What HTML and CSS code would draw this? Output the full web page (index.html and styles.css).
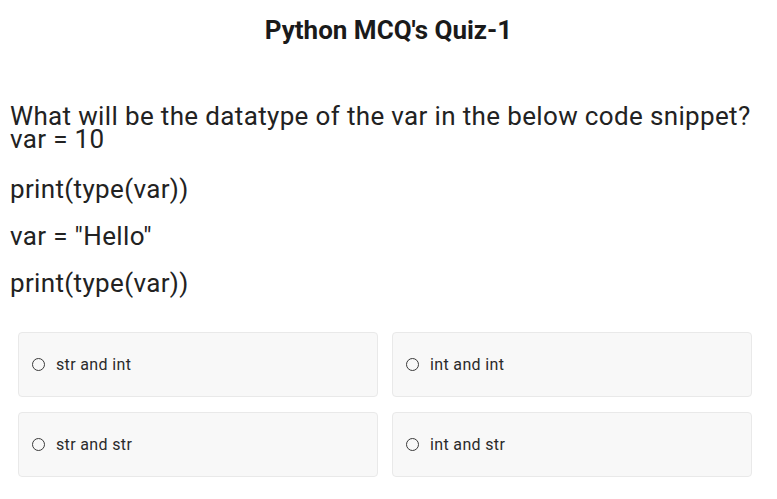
FILE: index.html
```html
<!DOCTYPE html>
<html>
<head>
<meta charset="utf-8">
<link rel="stylesheet" href="styles.css">
</head>
<body>
<div class="quiz">
  <h1 class="title">Python MCQ's Quiz-1</h1>
  <div class="question">
    <div class="q-head">What will be the datatype of the var in the below code snippet?</div>
    <p class="code first">var = 10</p>
    <p class="code">print(type(var))</p>
    <p class="code">var = "Hello"</p>
    <p class="code">print(type(var))</p>
  </div>
  <div class="options">
    <label class="option"><span class="radio"></span><span class="opt-text">str and int</span></label>
    <label class="option"><span class="radio"></span><span class="opt-text">int and int</span></label>
    <label class="option"><span class="radio"></span><span class="opt-text">str and str</span></label>
    <label class="option"><span class="radio"></span><span class="opt-text">int and str</span></label>
  </div>
</div>
</body>
</html>
```
FILE: styles.css
```css
html, body {
  margin: 0;
  padding: 0;
  background: #ffffff;
}
body {
  font-family: Roboto, "Liberation Sans", sans-serif;
  color: #1f1f1f;
}
.quiz {
  padding: 0 10px;
}
.title {
  margin: 0;
  padding-top: 16px;
  font-size: 26px;
  font-weight: 700;
  text-align: center;
  line-height: 28px;
  color: #1a1a1a;
}
.question {
  margin-top: 61px;
  font-size: 26px;
  letter-spacing: 0.35px;
  color: #222;
}
.q-head {
  line-height: 23px;
  white-space: nowrap;
}
.code {
  margin: 0;
  line-height: 28px;
}
.code.first {
  line-height: 23px;
}
.code + .code {
  margin-top: 19px;
}
.code.first + .code {
  margin-top: 24px;
}
.options {
  margin: 35px 15px 0 8px;
  display: grid;
  grid-template-columns: 1fr 1fr;
  column-gap: 14px;
  row-gap: 15px;
}
.option {
  display: flex;
  align-items: center;
  height: 63px;
  padding-left: 13px;
  background: #f8f8f8;
  border: 1px solid #e9e9e9;
  border-radius: 4px;
  font-size: 16px;
  letter-spacing: 0.35px;
  color: #2a2a2a;
}
.radio {
  width: 11px;
  height: 11px;
  border: 1.5px solid #3a3a3a;
  border-radius: 50%;
  margin-right: 11px;
  flex: none;
}
```
